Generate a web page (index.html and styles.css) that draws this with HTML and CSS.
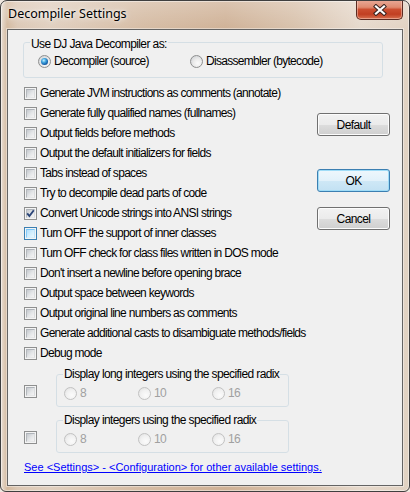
FILE: index.html
```html
<!DOCTYPE html>
<html>
<head>
<meta charset="utf-8">
<title>Decompiler Settings</title>
<link rel="stylesheet" href="styles.css">
</head>
<body>
<div class="window">
  <div class="titlebar">
    <span class="title">Decompiler Settings</span>
    <div class="close">
      <svg width="14" height="12" viewBox="0 0 14 12">
        <path d="M3 2.5 L11 9.5 M11 2.5 L3 9.5" stroke="#3b2420" stroke-width="4.2" stroke-linecap="square" fill="none"/>
        <path d="M3 2.5 L11 9.5 M11 2.5 L3 9.5" stroke="#ffffff" stroke-width="2.2" stroke-linecap="square" fill="none"/>
      </svg>
    </div>
  </div>
  <div class="client">
    <fieldset class="group mode">
      <legend>Use DJ Java Decompiler as:</legend>
      <div class="radio-row">
        <span class="radio-item"><span class="radio checked"></span>Decompiler (source)</span>
        <span class="radio-item"><span class="radio"></span>Disassembler (bytecode)</span>
      </div>
    </fieldset>

    <div class="options">
      <div class="checklist">
        <div class="check-row"><span class="checkbox"></span>Generate JVM instructions as comments (annotate)</div>
        <div class="check-row"><span class="checkbox"></span>Generate fully qualified names (fullnames)</div>
        <div class="check-row"><span class="checkbox"></span>Output fields before methods</div>
        <div class="check-row"><span class="checkbox"></span>Output the default initializers for fields</div>
        <div class="check-row"><span class="checkbox"></span>Tabs instead of spaces</div>
        <div class="check-row"><span class="checkbox"></span>Try to decompile dead parts of code</div>
        <div class="check-row"><span class="checkbox checked"><svg class="tick" width="13" height="13" viewBox="0 0 13 13"><path d="M3.2 6.4 L5.4 9 L9.8 3.2" stroke="#2b4578" stroke-width="1.9" fill="none"/></svg></span>Convert Unicode strings into ANSI strings</div>
        <div class="check-row"><span class="checkbox hot"></span>Turn OFF the support of inner classes</div>
        <div class="check-row"><span class="checkbox"></span>Turn OFF check for class files written in DOS mode</div>
        <div class="check-row"><span class="checkbox"></span>Don't insert a newline before opening brace</div>
        <div class="check-row"><span class="checkbox"></span>Output space between keywords</div>
        <div class="check-row"><span class="checkbox"></span>Output original line numbers as comments</div>
        <div class="check-row"><span class="checkbox"></span>Generate additional casts to disambiguate methods/fields</div>
        <div class="check-row"><span class="checkbox"></span>Debug mode</div>
      </div>
      <div class="buttons">
        <button class="btn">Default</button>
        <button class="btn btn-ok">OK</button>
        <button class="btn btn-cancel">Cancel</button>
      </div>
    </div>

    <div class="radix-row first">
      <span class="checkbox"></span>
      <fieldset class="group radix">
        <legend>Display long integers using the specified radix</legend>
        <div class="radio-row">
          <span class="radio-item"><span class="radio"></span>8</span>
          <span class="radio-item"><span class="radio"></span>10</span>
          <span class="radio-item"><span class="radio"></span>16</span>
        </div>
      </fieldset>
    </div>

    <div class="radix-row second">
      <span class="checkbox"></span>
      <fieldset class="group radix">
        <legend>Display integers using the specified radix</legend>
        <div class="radio-row">
          <span class="radio-item"><span class="radio"></span>8</span>
          <span class="radio-item"><span class="radio"></span>10</span>
          <span class="radio-item"><span class="radio"></span>16</span>
        </div>
      </fieldset>
    </div>

    <a class="link" href="#">See &lt;Settings&gt; - &lt;Configuration&gt; for other available settings.</a>
  </div>
</div>
</body>
</html>
```

FILE: styles.css
```css
html, body {
  margin: 0;
  padding: 0;
  background: #efe7df;
}

body {
  font-family: "Liberation Sans", Arial, sans-serif;
  font-size: 12px;
  letter-spacing: -0.6px;
  color: #000;
}

.window {
  width: 410px;
  height: 492px;
  box-sizing: border-box;
  border: 1px solid #3f3f3f;
  border-radius: 7px 7px 6px 6px;
  background:
    linear-gradient(180deg, rgba(255,255,255,0.25) 0%, rgba(255,255,255,0) 6%, rgba(0,0,0,0) 100%),
    linear-gradient(90deg, #e9ded3 0%, #d3b99f 1.5%, #dcc8b5 4%, #e0cfbf 12%, #d5bba3 35%, #cfb196 55%, #d8c1ab 72%, #e6d9cc 88%, #e1d2c2 100%);
  box-shadow: inset 0 0 0 1px rgba(255, 255, 255, 0.45);
  display: flex;
  flex-direction: column;
  padding: 0 6px 5px;
  overflow: hidden;
}

.titlebar {
  height: 28px;
  flex: none;
  display: flex;
  justify-content: space-between;
  align-items: flex-start;
}

.title {
  font-family: "Noto Sans", "Open Sans", sans-serif;
  font-size: 12.5px;
  letter-spacing: 0;
  line-height: 16px;
  padding: 5px 0 0 1px;
  color: #000;
  text-shadow: 0 0 6px rgba(255, 255, 255, 0.9), 0 0 3px rgba(255, 255, 255, 0.8);
}

.close {
  width: 47px;
  height: 20px;
  margin-top: -1px;
  box-sizing: border-box;
  border: 1px solid #5b2b22;
  border-top: none;
  border-radius: 0 0 5px 5px;
  background: linear-gradient(180deg, #e9aa98 0%, #df8a70 38%, #cc4e30 50%, #c13f22 75%, #d8704f 100%);
  box-shadow: inset 0 0 0 1px rgba(255, 225, 210, 0.45);
  display: flex;
  align-items: center;
  justify-content: center;
}

.client {
  flex: 1;
  border: 1px solid #646464;
  background: #f0f0f0;
  padding: 0 0 0 16px;
  box-shadow: 0 0 0 1px rgba(255, 255, 255, 0.4);
}

/* group boxes */
.group {
  border: 1px solid #d5dfe5;
  border-radius: 3px;
  margin: 0;
  min-width: 0;
  box-sizing: border-box;
}

.group legend {
  padding: 0 1px;
  margin-left: 6px;
  line-height: 13px;
  white-space: nowrap;
}

.mode {
  width: 360px;
  margin: 4px 0 0 -1px;
  padding: 3px 0 9px;
}

.mode legend {
  padding-top: 4px;
}

.radio-row {
  display: flex;
  align-items: center;
  height: 14px;
}

.mode .radio-row {
  padding-left: 14px;
}

.radio-item {
  display: flex;
  align-items: center;
  gap: 3px;
  white-space: nowrap;
  letter-spacing: -0.7px;
}

.mode .radio-item:first-child {
  width: 152px;
}

/* options */
.options {
  display: grid;
  grid-template-columns: 293px 73px;
  margin-top: 5px;
}

.check-row {
  display: flex;
  align-items: center;
  gap: 3px;
  height: 20px;
  white-space: nowrap;
  letter-spacing: -0.7px;
}

.checkbox {
  width: 13px;
  height: 13px;
  box-sizing: border-box;
  border: 1px solid #8e8f8f;
  background: #f4f4f4;
  position: relative;
  flex: none;
}

.checkbox::after {
  content: "";
  position: absolute;
  inset: 1px;
  border: 1px solid;
  border-color: #aeb3b9 #dadcde #e6e7e8 #b4b8bc;
  background: linear-gradient(135deg, #c5c9ce 0%, #e4e6e8 55%, #f4f4f4 100%);
}

.checkbox.hot {
  border-color: #3c7fb1;
}

.checkbox.hot::after {
  border-color: #79c6f9 #bfe3fb #d6eefc #86cbf9;
  background: linear-gradient(135deg, #b1dffd 0%, #d6effd 60%, #e9f7fe 100%);
}

.tick {
  position: absolute;
  left: -1px;
  top: -1px;
  z-index: 1;
}

/* radio */
.radio {
  width: 13px;
  height: 13px;
  box-sizing: border-box;
  border-radius: 50%;
  border: 1px solid #8e8f8f;
  background: radial-gradient(circle at 62% 66%, #fbfbfb 0%, #eaeaea 45%, #c6cacf 100%);
  position: relative;
  flex: none;
}

.radio.checked::after {
  content: "";
  position: absolute;
  inset: 2px;
  border-radius: 50%;
  background: radial-gradient(circle at 40% 35%, #c8f0ff 0%, #46a9e0 32%, #0f5aa6 70%, #1b355f 100%);
}

.radix .radio {
  border-color: #c2c2c2;
  background: radial-gradient(circle at 62% 66%, #fbfbfb 0%, #f1f1f1 50%, #dedede 100%);
}

/* buttons */
.buttons {
  display: flex;
  flex-direction: column;
  padding-top: 30px;
}

.btn {
  box-sizing: border-box;
  width: 73px;
  height: 23px;
  padding: 0;
  border: 1px solid #707070;
  border-radius: 3px;
  background: linear-gradient(180deg, #f2f2f2 0%, #ebebeb 50%, #dddddd 51%, #cfcfcf 100%);
  box-shadow: inset 0 0 0 1px #fcfcfc;
  font: inherit;
  letter-spacing: -0.6px;
  color: #000;
}

.btn-ok {
  margin-top: 33px;
  border-color: #3c7fb1;
  background: linear-gradient(180deg, #eef7fc 0%, #e2f1fa 50%, #cfe8f6 51%, #c2e1f3 100%);
  box-shadow: inset 0 0 0 1px #9fdcf7;
}

.btn-cancel {
  margin-top: 15px;
}

/* radix groups */
.radix-row {
  display: flex;
  align-items: flex-end;
}

.radix-row .checkbox {
  margin-bottom: 9px;
}

.radix-row.first {
  margin-top: 5px;
}

.radix-row.second {
  margin-top: 7px;
}

.radix {
  width: 233px;
  margin-left: 19px;
  padding: 5px 0 6px;
}

.radix .radio-row {
  padding-left: 7px;
}

.radix .radio-item {
  width: 74px;
  color: #a0a0a0;
}

.link {
  display: inline-block;
  margin-top: 8px;
  font-family: "Liberation Sans", Arial, sans-serif;
  font-size: 11px;
  letter-spacing: 0;
  line-height: 13px;
  color: #0000ff;
  text-decoration: underline;
}
```
